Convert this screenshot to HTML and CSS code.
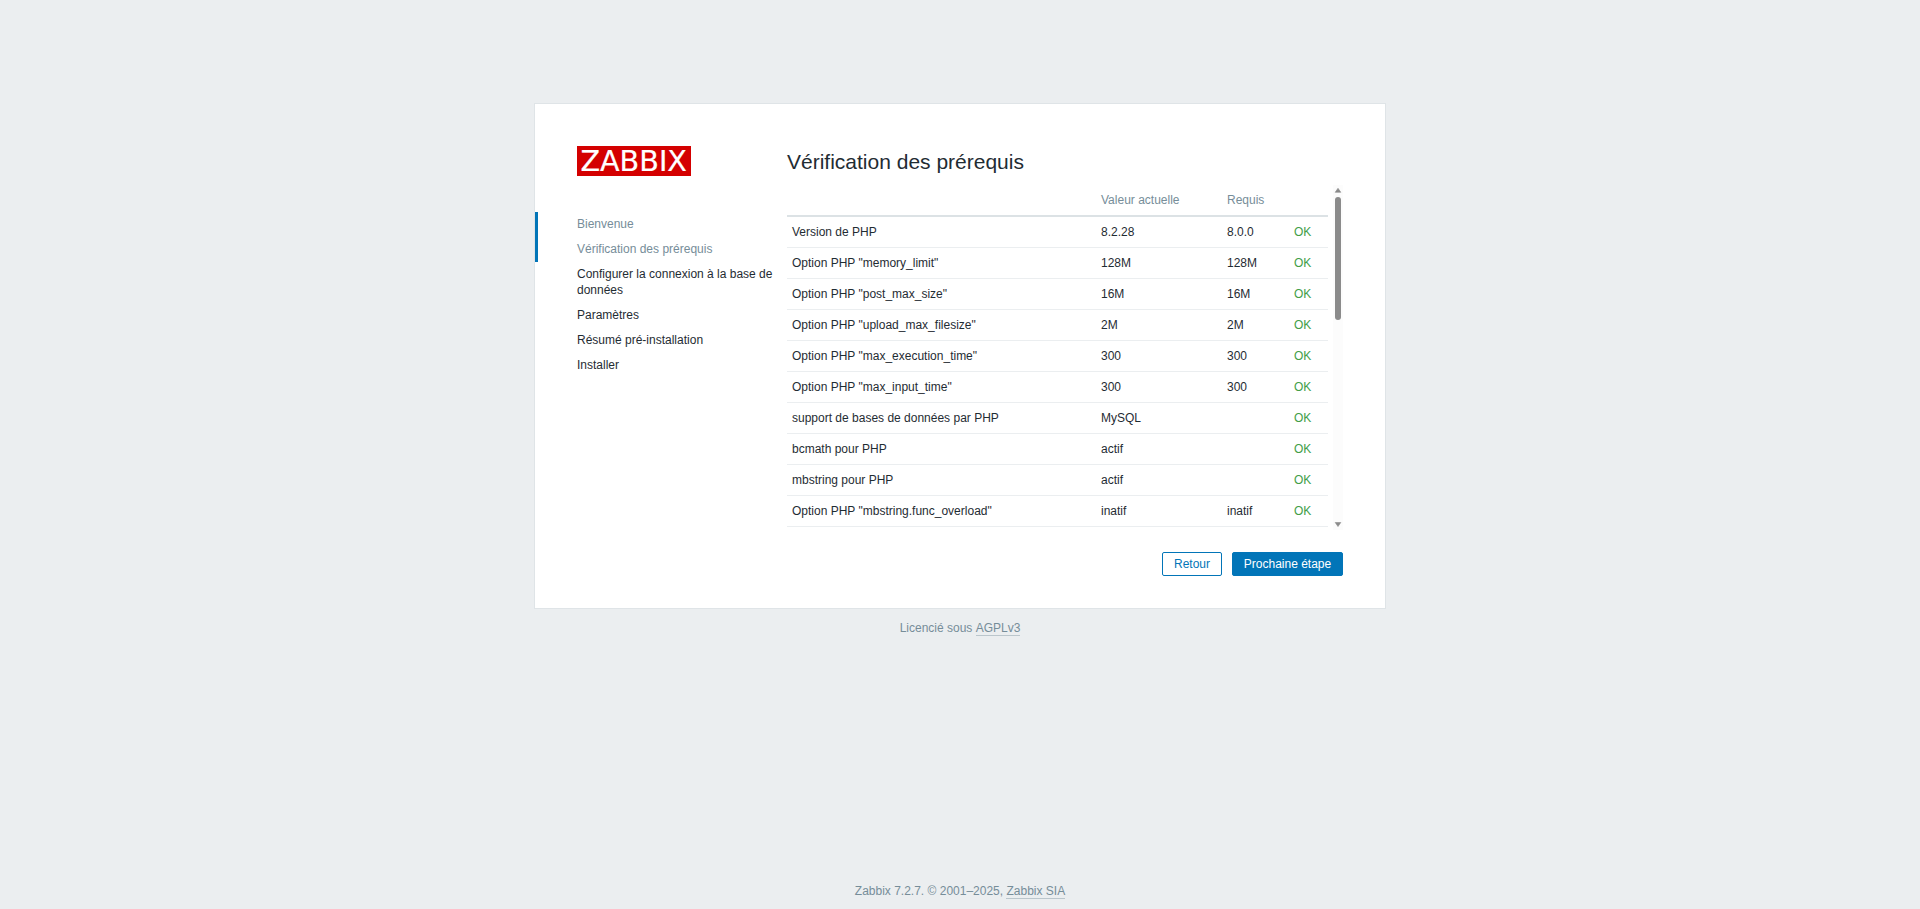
FILE: index.html
```html
<!DOCTYPE html>
<html lang="fr">
<head>
<meta charset="utf-8">
<title>Installation</title>
<link rel="stylesheet" href="styles.css">
</head>
<body>
<main class="wrapper">
  <div class="setup">
    <aside class="setup-left">
      <svg class="logo" width="114" height="30" viewBox="0 0 114 30" role="img" aria-label="Zabbix">
        <rect width="114" height="30" fill="#d40000"/>
        <text x="3.4" y="25.3" textLength="106.6" lengthAdjust="spacingAndGlyphs" class="logo-text">ZABBIX</text>
      </svg>
      <ul class="steps">
        <li class="done">Bienvenue</li>
        <li class="done">Vérification des prérequis</li>
        <li>Configurer la connexion à la base de données</li>
        <li>Paramètres</li>
        <li>Résumé pré-installation</li>
        <li>Installer</li>
      </ul>
    </aside>
    <section class="setup-right">
      <h1>Vérification des prérequis</h1>
      <div class="scroll-area">
        <table class="list">
          <colgroup><col class="c-name"><col class="c-value"><col class="c-required"><col class="c-state"></colgroup>
          <thead><tr><th></th><th>Valeur actuelle</th><th>Requis</th><th></th></tr></thead>
          <tbody>
            <tr><td>Version de PHP</td><td>8.2.28</td><td>8.0.0</td><td class="ok">OK</td></tr>
            <tr><td>Option PHP "memory_limit"</td><td>128M</td><td>128M</td><td class="ok">OK</td></tr>
            <tr><td>Option PHP "post_max_size"</td><td>16M</td><td>16M</td><td class="ok">OK</td></tr>
            <tr><td>Option PHP "upload_max_filesize"</td><td>2M</td><td>2M</td><td class="ok">OK</td></tr>
            <tr><td>Option PHP "max_execution_time"</td><td>300</td><td>300</td><td class="ok">OK</td></tr>
            <tr><td>Option PHP "max_input_time"</td><td>300</td><td>300</td><td class="ok">OK</td></tr>
            <tr><td>support de bases de données par PHP</td><td>MySQL</td><td></td><td class="ok">OK</td></tr>
            <tr><td>bcmath pour PHP</td><td>actif</td><td></td><td class="ok">OK</td></tr>
            <tr><td>mbstring pour PHP</td><td>actif</td><td></td><td class="ok">OK</td></tr>
            <tr><td>Option PHP "mbstring.func_overload"</td><td>inatif</td><td>inatif</td><td class="ok">OK</td></tr>
          </tbody>
        </table>
        <div class="scrollbar">
          <svg width="8" height="5" viewBox="0 0 8 5"><path d="M4 0.3 L6.8 4.3 H1.2 Z" fill="#8b8b8b" stroke="#8b8b8b" stroke-width=".6" stroke-linejoin="round"/></svg>
          <div class="thumb"></div>
          <svg class="down" width="8" height="5" viewBox="0 0 8 5"><path d="M4 4.5 L6.8 0.5 H1.2 Z" fill="#8b8b8b" stroke="#8b8b8b" stroke-width=".6" stroke-linejoin="round"/></svg>
        </div>
      </div>
      <div class="buttons">
        <button class="btn btn-alt">Retour</button>
        <button class="btn">Prochaine étape</button>
      </div>
    </section>
  </div>
  <div class="licence">Licencié sous <a>AGPLv3</a></div>
</main>
<footer>Zabbix 7.2.7. © 2001–2025, <a>Zabbix SIA</a></footer>
</body>
</html>
```
FILE: styles.css
```css
* { box-sizing: border-box; }

body {
  margin: 0;
  height: 909px;
  display: flex;
  flex-direction: column;
  overflow: hidden;
  background: #ebeef0;
  color: #1f2c33;
  font-family: Arial, "Liberation Sans", sans-serif;
  font-size: 12px;
  line-height: 16px;
}

.wrapper {
  flex: 1;
  padding-top: 103px;
}

.setup {
  display: flex;
  width: 852px;
  height: 506px;
  margin: 0 auto;
  padding: 42px 42px 32px 0;
  background: #fff;
  border: 1px solid #dfe4e7;
}

.setup-left { width: 252px; }

.logo {
  display: block;
  margin-left: 42px;
  overflow: visible;
}

.logo-text {
  fill: #fff;
  stroke: #fff;
  stroke-width: .2px;
  font-family: "DejaVu Sans", sans-serif;
  font-size: 29px;
}

.steps {
  margin: 36px 0 0;
  padding: 0;
  list-style: none;
}

.steps li {
  padding: 4px 13px 5px 39px;
  border-left: 3px solid transparent;
}

.steps .done {
  color: #768d99;
  border-left-color: #0275b8;
}

.setup-right {
  flex: 1;
  display: flex;
  flex-direction: column;
}

h1 {
  margin: 0;
  height: 39px;
  font-size: 21px;
  font-weight: 400;
  line-height: 32px;
}

.scroll-area {
  display: flex;
  justify-content: space-between;
  height: 345px;
}

.list {
  width: 541px;
  height: 342px;
  table-layout: fixed;
  border-collapse: separate;
  border-spacing: 0;
}

.c-name { width: 309px; }
.c-value { width: 126px; }
.c-required { width: 67px; }
.c-state { width: 39px; }

.list th {
  height: 32px;
  padding: 0 5px 1px;
  border-bottom: 2px solid #dce2e5;
  color: #768d99;
  font-weight: 400;
  text-align: left;
}

.list td {
  height: 31px;
  padding: 0 5px;
  border-bottom: 1px solid #ebeef0;
}

.list .ok { color: #429e47; }

.scrollbar {
  display: flex;
  flex-direction: column;
  align-items: center;
  width: 10px;
  padding: 3px 0 3px;
  background: #fcfcfc;
}

.thumb {
  width: 6px;
  height: 123px;
  margin-top: 4px;
  border-radius: 3px;
  background: #8b8b8b;
}

.down { margin-top: auto; }

.buttons {
  display: flex;
  justify-content: flex-end;
  gap: 10px;
  margin-top: 22px;
}

.btn {
  width: 111px;
  height: 24px;
  padding: 0 0 1px;
  border: 1px solid #0275b8;
  border-radius: 2px;
  background: #0275b8;
  color: #fff;
  font: inherit;
}

.btn-alt {
  width: 60px;
  background: #fff;
  color: #0275b8;
}

.licence, footer {
  color: #768d99;
  text-align: center;
}

.licence { padding-top: 11px; }

footer { height: 26px; }

.licence a, footer a {
  display: inline-block;
  line-height: 14px;
  border-bottom: 1px solid #bbc6cc;
}
```
